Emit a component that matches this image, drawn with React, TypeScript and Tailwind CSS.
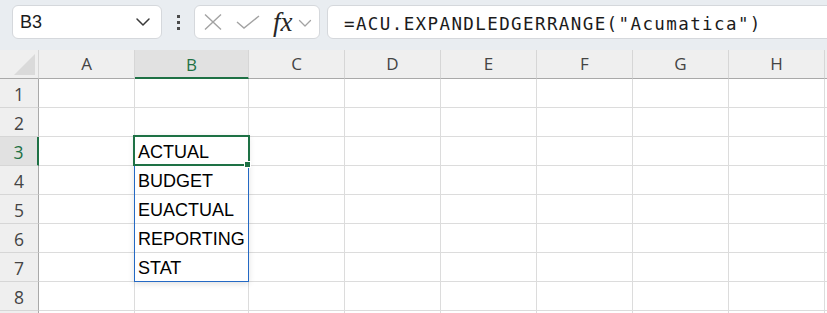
import React from 'react';

const cols = ['A', 'B', 'C', 'D', 'E', 'F', 'G', 'H', 'I'];
const rows = [1, 2, 3, 4, 5, 6, 7, 8, 9];
const values: Record<number, string> = {
  3: 'ACTUAL',
  4: 'BUDGET',
  5: 'EUACTUAL',
  6: 'REPORTING',
  7: 'STAT',
};

const headerFont = { fontFamily: '"Open Sans", "Noto Sans", sans-serif' };

function Toolbar() {
  return (
    <div className="flex h-[50px] items-start overflow-hidden bg-[#e9edf1] pl-3 pt-[5px]">
      {/* Name box */}
      <div className="flex h-[34px] w-[150px] shrink-0 items-center justify-between rounded-md border border-[#d5d8dc] bg-white pl-[7px] pr-[8px]">
        <span className="text-[18px] text-[#1b1b1b]" style={{ fontFamily: '"Liberation Sans", Arial, sans-serif' }}>
          B3
        </span>
        <svg width="16" height="10" viewBox="0 0 16 10" className="mr-[2px]">
          <path d="M2 2 L8 8 L14 2" fill="none" stroke="#3a3a3a" strokeWidth="1.5" strokeLinecap="round" strokeLinejoin="round" />
        </svg>
      </div>

      {/* Vertical dots */}
      <div className="flex h-[34px] w-[32px] shrink-0 flex-col items-center justify-center gap-[3px]">
        <span className="h-[3px] w-[3px] bg-[#4a4a4a]" />
        <span className="h-[3px] w-[3px] bg-[#4a4a4a]" />
        <span className="h-[3px] w-[3px] bg-[#4a4a4a]" />
      </div>

      {/* Cancel / Enter / fx */}
      <div className="flex h-[34px] w-[126px] shrink-0 items-center rounded-md border border-[#d5d8dc] bg-white pl-[8px]">
        <svg width="20" height="16" viewBox="0 0 20 16">
          <path d="M2 0.5 L18 15.5 M18 0.5 L2 15.5" fill="none" stroke="#a3a3a3" strokeWidth="1.4" />
        </svg>
        <svg width="24" height="14" viewBox="0 0 24 14" className="ml-[13px]">
          <path d="M1 7 L8 13 L23 1" fill="none" stroke="#a3a3a3" strokeWidth="1.4" />
        </svg>
        <span
          className="ml-[13px] text-[27px] italic leading-none text-[#262626]"
          style={{ fontFamily: '"Liberation Serif", "Times New Roman", serif' }}
        >
          fx
        </span>
        <svg width="14" height="9" viewBox="0 0 14 9" className="ml-[5px] mt-[2px]">
          <path d="M1.5 1.5 L7 7 L12.5 1.5" fill="none" stroke="#a3a3a3" strokeWidth="1.3" strokeLinecap="round" strokeLinejoin="round" />
        </svg>
      </div>

      {/* Formula bar */}
      <div className="ml-[7px] flex h-[34px] w-[520px] shrink-0 items-center rounded-md border border-[#d5d8dc] bg-white pl-[16px] pt-[4px]">
        <span
          className="whitespace-pre text-[17.5px] tracking-[1.4px] text-[#1b1b1b]"
          style={{ fontFamily: '"DejaVu Sans Mono", "Liberation Mono", monospace' }}
        >
          =ACU.EXPANDLEDGERRANGE("Acumatica")
        </span>
      </div>
    </div>
  );
}

function Sheet() {
  return (
    <div className="relative overflow-hidden">
      <div className="grid grid-cols-[39px_96px_114px_96px_96px_96px_96px_96px_96px_96px] grid-rows-[29px_repeat(9,29px)] bg-white">
        {/* corner */}
        <div className="relative border-b border-r border-b-[#a9a9a9] border-r-[#d6d6d6] bg-[#efefef]">
          <svg width="39" height="29" viewBox="0 0 39 29" className="absolute left-0 top-0">
            <polygon points="14,25 35,4 35,25" fill="#dadada" />
          </svg>
        </div>
        {cols.map((c) => {
          const sel = c === 'B';
          return (
            <div
              key={c}
              className={
                sel
                  ? 'flex items-center justify-center border-b-2 border-r border-b-[#1e7145] border-r-[#d6d6d6] bg-[#e1e1e1] pt-[2px] text-[17px] text-[#1e7145]'
                  : 'flex items-center justify-center border-b border-r border-b-[#a9a9a9] border-r-[#d6d6d6] bg-[#efefef] text-[17px] text-[#444444]'
              }
              style={headerFont}
            >
              {c === 'I' ? '' : c}
            </div>
          );
        })}

        {rows.map((r) => (
          <React.Fragment key={r}>
            <div
              className={
                r === 3
                  ? 'flex items-center justify-center border-b border-r-2 border-b-[#d6d6d6] border-r-[#1e7145] bg-[#e1e1e1] pt-[3px] text-[17.5px] text-[#1e7145]'
                  : 'flex items-center justify-center border-b border-r border-b-[#d6d6d6] border-r-[#a9a9a9] bg-[#efefef] pt-[3px] text-[17.5px] text-[#444444]'
              }
              style={headerFont}
            >
              {r === 9 ? '' : r}
            </div>
            {cols.map((c) => (
              <div
                key={c}
                className="flex items-center overflow-hidden whitespace-nowrap border-b border-r border-[#dcdcdc] pl-[3px] pt-[2px] text-[18px] text-black"
                style={{ fontFamily: '"Liberation Sans", Arial, sans-serif' }}
              >
                {c === 'B' ? values[r] ?? '' : ''}
              </div>
            ))}
          </React.Fragment>
        ))}
      </div>

      {/* spill range border */}
      <div className="pointer-events-none absolute left-[134px] top-[85px] h-[147px] w-[115px] border border-[#2469c4] shadow-[0_2px_6px_rgba(0,0,0,0.12)]" />
      {/* active cell */}
      <div className="pointer-events-none absolute left-[133px] top-[85px] h-[31px] w-[117px] border-2 border-[#1e7145]" />
      {/* fill handle */}
      <div className="pointer-events-none absolute left-[244px] top-[111px] h-[7px] w-[7px] border border-white bg-[#1e7145]" />
    </div>
  );
}

export default function App() {
  return (
    <div className="h-[313px] w-[827px] overflow-hidden bg-white">
      <Toolbar />
      <Sheet />
    </div>
  );
}
